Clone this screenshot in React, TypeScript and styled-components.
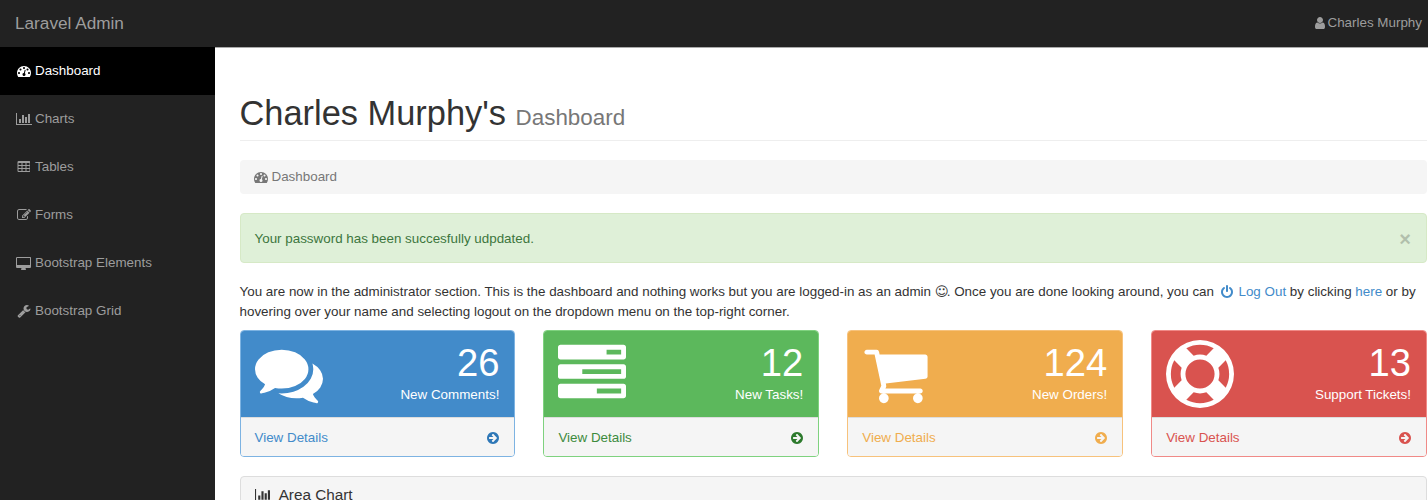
import React from "react";
import styled, { createGlobalStyle } from "styled-components";

const GlobalStyle = createGlobalStyle`
  html, body { margin: 0; padding: 0; height: 500px; overflow: hidden; background: #fff; }
  body { font-family: "Liberation Sans", Arial, sans-serif; font-size: 13.4px; line-height: 20px; color: #333; }
  * { box-sizing: border-box; }
`;

const icons = {
  dashboard: { box: "0 0 1792 1792", d: "M384 1152q0-53-37.5-90.5t-90.5-37.5-90.5 37.5-37.5 90.5 37.5 90.5 90.5 37.5 90.5-37.5 37.5-90.5zm192-448q0-53-37.5-90.5t-90.5-37.5-90.5 37.5-37.5 90.5 37.5 90.5 90.5 37.5 90.5-37.5 37.5-90.5zm428 481l101-382q6-26-7.5-48.5t-38.5-29.5-48 6.5-30 39.5l-101 382q-60 5-107 43.5t-63 98.5q-20 77 20 146t117 89 146-20 89-117q16-60-6-117t-72-91zm660-33q0-53-37.5-90.5t-90.5-37.5-90.5 37.5-37.5 90.5 37.5 90.5 90.5 37.5 90.5-37.5 37.5-90.5zm-640-640q0-53-37.5-90.5t-90.5-37.5-90.5 37.5-37.5 90.5 37.5 90.5 90.5 37.5 90.5-37.5 37.5-90.5zm448 192q0-53-37.5-90.5t-90.5-37.5-90.5 37.5-37.5 90.5 37.5 90.5 90.5 37.5 90.5-37.5 37.5-90.5zm320 448q0 261-141 483-19 29-54 29h-1402q-35 0-54-29-141-221-141-483 0-182 71-348t191-286 286-191 348-71 348 71 286 191 191 286 71 348z" },
  chart: { box: "0 0 2048 1792", d: "M640 896v512h-256v-512h256zm384-512v1024h-256v-1024h256zm1024 1152v128h-2048v-1536h128v1408h1920zm-640-896v768h-256v-768h256zm384-384v1152h-256v-1152h256z" },
  table: { box: "0 0 1664 1792", d: "M576 1376v-192q0-14-9-23t-23-9h-320q-14 0-23 9t-9 23v192q0 14 9 23t23 9h320q14 0 23-9t9-23zm0-384v-192q0-14-9-23t-23-9h-320q-14 0-23 9t-9 23v192q0 14 9 23t23 9h320q14 0 23-9t9-23zm512 384v-192q0-14-9-23t-23-9h-320q-14 0-23 9t-9 23v192q0 14 9 23t23 9h320q14 0 23-9t9-23zm-512-768v-192q0-14-9-23t-23-9h-320q-14 0-23 9t-9 23v192q0 14 9 23t23 9h320q14 0 23-9t9-23zm512 384v-192q0-14-9-23t-23-9h-320q-14 0-23 9t-9 23v192q0 14 9 23t23 9h320q14 0 23-9t9-23zm512 384v-192q0-14-9-23t-23-9h-320q-14 0-23 9t-9 23v192q0 14 9 23t23 9h320q14 0 23-9t9-23zm-512-768v-192q0-14-9-23t-23-9h-320q-14 0-23 9t-9 23v192q0 14 9 23t23 9h320q14 0 23-9t9-23zm512 384v-192q0-14-9-23t-23-9h-320q-14 0-23 9t-9 23v192q0 14 9 23t23 9h320q14 0 23-9t9-23zm0-384v-192q0-14-9-23t-23-9h-320q-14 0-23 9t-9 23v192q0 14 9 23t23 9h320q14 0 23-9t9-23zm128-320v1088q0 66-47 113t-113 47h-1344q-66 0-113-47t-47-113v-1088q0-66 47-113t113-47h1344q66 0 113 47t47 113z" },
  edit: { box: "0 0 1792 1792", d: "M888 1184l116-116-152-152-116 116v56h96v96h56zm440-720q-16-16-33 1l-350 350q-17 17-1 33t33-1l350-350q17-17 1-33zm80 594v190q0 119-84.5 203.5t-203.5 84.5h-832q-119 0-203.5-84.5t-84.5-203.5v-832q0-119 84.5-203.5t203.5-84.5h832q63 0 117 25 15 7 18 23 3 17-9 29l-49 49q-14 14-32 8-23-6-45-6h-832q-66 0-113 47t-47 113v832q0 66 47 113t113 47h832q66 0 113-47t47-113v-126q0-13 9-22l64-64q15-15 35-7t20 29zm-96-738l288 288-672 672h-288v-288zm444 132l-92 92-288-288 92-92q28-28 68-28t68 28l152 152q28 28 28 68t-28 68z" },
  desktop: { box: "0 -128 1920 1792", d: "M1792 992v-832q0-13-9.5-22.5t-22.5-9.5h-1600q-13 0-22.5 9.5t-9.5 22.5v832q0 13 9.5 22.5t22.5 9.5h1600q13 0 22.5-9.5t9.5-22.5zm128-832v1088q0 66-47 113t-113 47h-544q0 37 16 77.5t32 71 16 43.5q0 26-19 45t-45 19h-512q-26 0-45-19t-19-45q0-14 16-44t32-70 16-78h-544q-66 0-113-47t-47-113v-1088q0-66 47-113t113-47h1632q66 0 113 47t47 113z" },
  wrench: { box: "0 0 1792 1792", d: "M448 1472q0-26-19-45t-45-19-45 19-19 45 19 45 45 19 45-19 19-45zm644-420l-682 682q-37 37-90 37-52 0-91-37l-106-108q-38-36-38-90 0-53 38-91l681-681q39 98 114.5 173.5t173.5 114.5zm634-435q0 39-23 106-47 134-164.5 217.5t-258.5 83.5q-185 0-316.5-131.5t-131.5-316.5 131.5-316.5 316.5-131.5q58 0 121.5 16.5t107.5 46.5q16 11 16 28t-16 28l-293 169v224l193 107q5-3 79-48.5t135.5-81 70.5-35.5q15 0 23.5 10t8.5 25z" },
  user: { box: "128 0 1408 1792", d: "M1536 1399q0 109-62.5 187t-150.5 78h-854q-88 0-150.5-78t-62.5-187q0-85 8.5-160.5t31.5-152 58.5-131 94-89 134.5-34.5q131 128 313 128t313-128q76 0 134.5 34.5t94 89 58.5 131 31.5 152 8.5 160.5zm-256-887q0 159-112.5 271.5t-271.5 112.5-271.5-112.5-112.5-271.5 112.5-271.5 271.5-112.5 271.5 112.5 112.5 271.5z" },
  power: { box: "0 -256 1536 1792", d: "M1536 640q0 156-61 298t-164 245-245 164-298 61-298-61-245-164-164-245-61-298q0-182 80.5-343t226.5-270q43-32 95.5-25t83.5 50q32 42 24.5 94.5t-49.5 84.5q-98 74-151.5 181t-53.5 228q0 104 40.5 198.5t109.5 163.5 163.5 109.5 198.5 40.5 198.5-40.5 163.5-109.5 109.5-163.5 40.5-198.5q0-121-53.5-228t-151.5-181q-42-32-49.5-84.5t24.5-94.5q31-43 84-50t95 25q146 109 226.5 270t80.5 343zm-640-768v640q0 52-38 90t-90 38-90-38-38-90v-640q0-52 38-90t90-38 90 38 38 90z" },
  comments: { box: "0 0 1792 1792", d: "M1408 768q0 139-94 257t-256.5 186.5-353.5 68.5q-86 0-176-16-124 88-278 128-36 9-86 16h-3q-11 0-20.5-8t-11.5-21q-1-3-1-6.5t.5-6.5 2-6l2.5-5 3.5-5.5 4-5 4.5-5 4-4.5q5-6 23-25t26-29.5 22.5-29 25-38.5 20.5-44q-124-72-195-177t-71-224q0-139 94-257t256.5-186.5 353.5-68.5 353.5 68.5 256.5 186.5 94 257zm384 256q0 120-71 224.5t-195 176.5q10 24 20.5 44t25 38.5 22.5 29 26 29.5 23 25q1 1 4 4.5t4.5 5 4 5 3.5 5.5l2.5 5 2 6 .5 6.5-1 6.5q-3 14-13 22t-22 7q-50-7-86-16-154-40-278-128-90 16-176 16-271 0-472-132 58 4 88 4 161 0 309-45t264-129q125-92 192-212t67-254q0-77-23-152 129 71 204 178t75 230z" },
  tasks: { box: "0 0 1792 1792", d: "M1024 1408h640v-128h-640v128zm-384-512h1024v-128h-1024v128zm640-512h384v-128h-384v128zm512 832v256q0 26-19 45t-45 19h-1664q-26 0-45-19t-19-45v-256q0-26 19-45t45-19h1664q26 0 45 19t19 45zm0-512v256q0 26-19 45t-45 19h-1664q-26 0-45-19t-19-45v-256q0-26 19-45t45-19h1664q26 0 45 19t19 45zm0-512v256q0 26-19 45t-45 19h-1664q-26 0-45-19t-19-45v-256q0-26 19-45t45-19h1664q26 0 45 19t19 45z" },
  cart: { box: "0 0 1792 1792", d: "M704 1536q0 52-38 90t-90 38-90-38-38-90 38-90 90-38 90 38 38 90zm896 0q0 52-38 90t-90 38-90-38-38-90 38-90 90-38 90 38 38 90zm128-1088v512q0 24-16.5 42.5t-40.5 21.5l-1044 122q13 60 13 70 0 16-24 64h920q26 0 45 19t19 45-19 45-45 19h-1024q-26 0-45-19t-19-45q0-11 8-31.5t16-36 21.5-40 15.5-29.5l-177-823h-204q-26 0-45-19t-19-45 19-45 45-19h256q16 0 28.5 6.5t19.5 15.5 13 24.5 8 26 5.5 29.5 4.5 26h1201q26 0 45 19t19 45z" },
  lifering: { box: "0 0 1792 1792", d: "M896 0q182 0 348 71t286 191 191 286 71 348-71 348-191 286-286 191-348 71-348-71-286-191-191-286-71-348 71-348 191-286 286-191 348-71zm0 128q-190 0-361 90l194 194q82-28 167-28t167 28l194-194q-171-90-361-90zm-678 1129l194-194q-28-82-28-167t28-167l-194-194q-90 171-90 361t90 361zm678 407q190 0 361-90l-194-194q-82 28-167 28t-167-28l-194 194q171 90 361 90zm0-384q159 0 271.5-112.5t112.5-271.5-112.5-271.5-271.5-112.5-271.5 112.5-112.5 271.5 112.5 271.5 271.5 112.5zm484-217l194 194q90-171 90-361t-90-361l-194 194q28 82 28 167t-28 167z" },
  arrow: { box: "0 -128 1536 1536", d: "M1285 640q0-27-18-45l-91-91-362-362q-18-18-45-18t-45 18l-91 91q-18 18-18 45t18 45l189 189h-502q-26 0-45 19t-19 45v128q0 26 19 45t45 19h502l-189 189q-19 19-19 45t19 45l91 91q18 18 45 18t45-18l362-362 91-91q18-18 18-45zm251 0q0 209-103 385.5t-279.5 279.5-385.5 103-385.5-103-279.5-279.5-103-385.5 103-385.5 279.5-279.5 385.5-103 385.5 103 279.5 279.5 103 385.5z" },
};

type IconName = keyof typeof icons;

const Svg = styled.svg<{ $h: number }>`
  display: block;
  height: ${(p) => p.$h}px;
  width: auto;
  fill: currentColor;
  flex: none;
`;

const Icon = ({ name, h }: { name: IconName; h: number }) => (
  <Svg viewBox={icons[name].box} $h={h} aria-hidden="true">
    <path d={icons[name].d} />
  </Svg>
);

const Navbar = styled.header`
  height: 47px;
  background: #222;
  display: flex;
  align-items: center;
  justify-content: space-between;
  padding: 0 6px 2px 15px;
  color: #9d9d9d;
`;

const Brand = styled.span`
  font-size: 17.2px;
`;

const UserName = styled.span`
  display: flex;
  align-items: center;
  gap: 2px;
`;

const Layout = styled.div`
  display: flex;
  height: 453px;
  overflow: hidden;
`;

const Sidebar = styled.nav`
  width: 215px;
  flex: none;
  background: #222;
`;

const NavItem = styled.a<{ $active?: boolean }>`
  display: flex;
  align-items: center;
  height: 48px;
  padding-left: 16px;
  padding-bottom: ${(p) => (p.$active ? "0" : "1px")};
  color: ${(p) => (p.$active ? "#fff" : "#9d9d9d")};
  background: ${(p) => (p.$active ? "#000" : "transparent")};
`;

const NavIconSlot = styled.span`
  display: flex;
  justify-content: center;
  width: 15px;
  margin-right: 4px;
`;

const Main = styled.main`
  flex: 1;
  min-width: 0;
  padding: 46px 1px 0 24.5px;
  border-top: 1px solid #aaa;
`;

const PageHeader = styled.h1`
  margin: 0 0 19px;
  padding-bottom: 8px;
  border-bottom: 1px solid #eee;
  font-size: 34.4px;
  line-height: 38px;
  font-weight: 400;
  color: #333;
`;

const Small = styled.small`
  font-size: 22.4px;
  line-height: 1;
  color: #777;
`;

const Crumb = styled.div`
  display: flex;
  align-items: center;
  gap: 4px;
  height: 34px;
  margin-bottom: 19px;
  padding: 0 14px;
  border-radius: 4px;
  background: #f5f5f5;
  color: #777;
`;

const Alert = styled.div`
  display: flex;
  align-items: center;
  justify-content: space-between;
  height: 50px;
  margin-bottom: 18px;
  padding: 1px 15px 0 14px;
  border: 1px solid #d6e9c6;
  border-radius: 4px;
  background: #dff0d8;
  color: #3c763d;
`;

const Close = styled.span`
  font-size: 20px;
  font-weight: 700;
  color: #000;
  opacity: 0.2;
`;

const Intro = styled.p`
  margin: 0 0 8px;
  padding-top: 1px;
`;

const Link = styled.a`
  color: #428bca;
`;

const PowerIcon = styled.span`
  display: inline-block;
  height: 10px;
  margin: 0 2px 0 3px;
  color: #428bca;
  svg { margin-top: -1px; }
`;

const Smiley = styled.span`
  font-family: "DejaVu Sans", sans-serif;
  font-size: 13.4px;
  line-height: 1;
  margin-right: -2px;
`;

const Cards = styled.div`
  display: grid;
  grid-template-columns: repeat(4, 1fr);
  gap: 28px;
  margin-bottom: 19px;
`;

const Card = styled.article<{ $border: string }>`
  height: 127px;
  border: 1px solid ${(p) => p.$border};
  border-radius: 4px;
  overflow: hidden;
  display: flex;
  flex-direction: column;
`;

const CardTop = styled.div<{ $bg: string }>`
  height: 86px;
  display: flex;
  align-items: center;
  justify-content: space-between;
  padding: 0 15px 0 14px;
  background: ${(p) => p.$bg};
  color: #fff;
`;

const Stat = styled.div`
  text-align: right;
  padding-top: 2px;
  margin-bottom: 3px;
`;

const Huge = styled.div`
  font-size: 38.2px;
  line-height: 42px;
`;

const CardLabel = styled.div`
  margin-top: 1px;
`;

const CardFooter = styled.div<{ $color: string; $iconColor: string }>`
  flex: 1;
  display: flex;
  align-items: center;
  justify-content: space-between;
  padding: 2px 15px 0 14px;
  background: #f5f5f5;
  border-top: 1px solid #ddd;
  color: ${(p) => p.$color};
  svg { color: ${(p) => p.$iconColor}; }
`;

const Panel = styled.section`
  border: 1px solid #ddd;
  border-radius: 4px;
  background: #f5f5f5;
  padding: 8px 14px 7px;
  display: flex;
  align-items: center;
  gap: 7px;
  font-size: 15.3px;
  color: #333;
`;

const nav: { label: string; icon: IconName; active?: boolean }[] = [
  { label: "Dashboard", icon: "dashboard", active: true },
  { label: "Charts", icon: "chart" },
  { label: "Tables", icon: "table" },
  { label: "Forms", icon: "edit" },
  { label: "Bootstrap Elements", icon: "desktop" },
  { label: "Bootstrap Grid", icon: "wrench" },
];

const cards: { n: string; label: string; icon: IconName; bg: string; border: string; color: string; iconColor: string }[] = [
  { n: "26", label: "New Comments!", icon: "comments", bg: "#428bca", border: "#7db3e2", color: "#428bca", iconColor: "#2f78b7" },
  { n: "12", label: "New Tasks!", icon: "tasks", bg: "#5cb85c", border: "#7fd27f", color: "#3d8b3d", iconColor: "#2d7a2d" },
  { n: "124", label: "New Orders!", icon: "cart", bg: "#f0ad4e", border: "#f7c27c", color: "#f0ad4e", iconColor: "#f0ad4e" },
  { n: "13", label: "Support Tickets!", icon: "lifering", bg: "#d9534f", border: "#f08a87", color: "#d9534f", iconColor: "#d9534f" },
];

export default function App() {
  return (
    <>
      <GlobalStyle />
      <Navbar>
        <Brand>Laravel Admin</Brand>
        <UserName>
          <Icon name="user" h={14} />
          Charles Murphy
        </UserName>
      </Navbar>
      <Layout>
        <Sidebar>
          {nav.map((item) => (
            <NavItem key={item.label} $active={item.active}>
              <NavIconSlot>
                <Icon name={item.icon} h={14} />
              </NavIconSlot>
              {item.label}
            </NavItem>
          ))}
        </Sidebar>
        <Main>
          <PageHeader>
            Charles Murphy's <Small>Dashboard</Small>
          </PageHeader>
          <Crumb>
            <Icon name="dashboard" h={14} />
            Dashboard
          </Crumb>
          <Alert>
            Your password has been succesfully udpdated.
            <Close>×</Close>
          </Alert>
          <Intro>
            You are now in the administrator section. This is the dashboard and nothing works but you are logged-in as an admin <Smiley>☺</Smiley>. Once you are done looking around, you can{" "}
            <PowerIcon>
              <Icon name="power" h={14} />
            </PowerIcon>{" "}
            <Link>Log Out</Link> by clicking <Link>here</Link> or by hovering over your name and selecting logout on the dropdown menu on the top-right corner.
          </Intro>
          <Cards>
            {cards.map((c) => (
              <Card key={c.label} $border={c.border}>
                <CardTop $bg={c.bg}>
                  <Icon name={c.icon} h={68} />
                  <Stat>
                    <Huge>{c.n}</Huge>
                    <CardLabel>{c.label}</CardLabel>
                  </Stat>
                </CardTop>
                <CardFooter $color={c.color} $iconColor={c.iconColor}>
                  View Details
                  <Icon name="arrow" h={12} />
                </CardFooter>
              </Card>
            ))}
          </Cards>
          <Panel>
            <Icon name="chart" h={15} />
            Area Chart
          </Panel>
        </Main>
      </Layout>
    </>
  );
}
